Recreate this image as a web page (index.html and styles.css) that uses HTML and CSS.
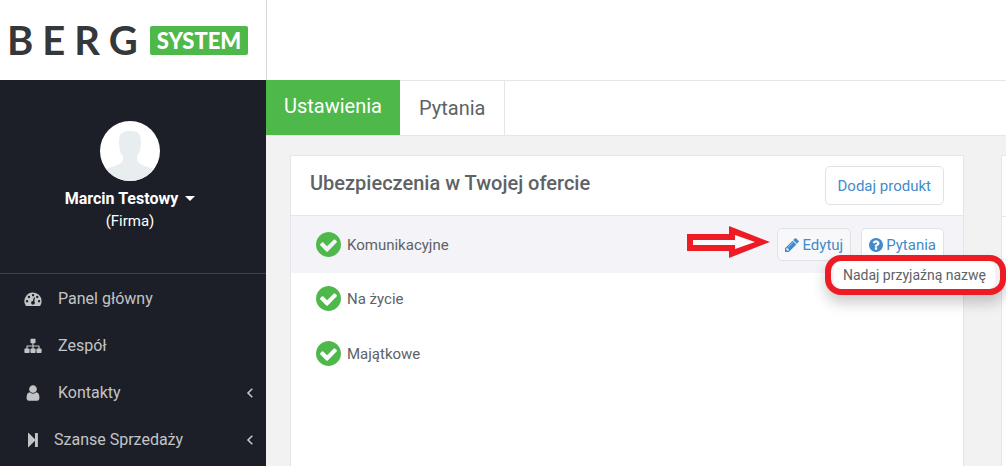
FILE: index.html
```html
<!DOCTYPE html>
<html lang="pl">
<head>
<meta charset="utf-8">
<meta name="viewport" content="width=device-width, initial-scale=1">
<title>Berg System – Ustawienia</title>
<link rel="stylesheet" href="styles.css">
</head>
<body>
<svg class="sprite" aria-hidden="true">
  <symbol id="check" viewBox="128 128 1536 1536"><path d="M1412 734q0-28-18-46l-91-90q-19-19-45-19t-45 19l-408 407-226-226q-19-19-45-19t-45 19l-91 90q-18 18-18 46 0 27 18 45l362 362q19 19 45 19 27 0 46-19l543-543q18-18 18-45zm252 162q0 209-103 385.5t-279.5 279.5-385.5 103-385.5-103-279.5-279.5-103-385.5 103-385.5 279.5-279.5 385.5-103 385.5 103 279.5 279.5 103 385.5z"/></symbol>
  <symbol id="question" viewBox="128 128 1536 1536"><path d="M1024 1376v-192q0-14-9-23t-23-9h-192q-14 0-23 9t-9 23v192q0 14 9 23t23 9h192q14 0 23-9t9-23zm256-672q0-88-55.5-163t-138.5-116-170-41q-243 0-371 213-15 24 8 42l132 100q7 6 19 6 16 0 25-12 53-68 86-92 34-24 86-24 48 0 85.5 26t37.5 59q0 38-20 61t-68 45q-63 28-115.5 86.5t-52.5 125.5v36q0 14 9 23t23 9h192q14 0 23-9t9-23q0-19 21.5-49.5t54.5-49.5q32-18 49-28.5t46-35 44.5-48 28-60.5 12.5-81zm384 192q0 209-103 385.5t-279.5 279.5-385.5 103-385.5-103-279.5-279.5-103-385.5 103-385.5 279.5-279.5 385.5-103 385.5 103 279.5 279.5 103 385.5z"/></symbol>
  <symbol id="pencil" viewBox="128 128 1536 1536"><path d="M491 1536l91-91-235-235-91 91v107h128v128h107zm523-928q0-22-22-22-10 0-17 7l-542 542q-7 7-7 17 0 22 22 22 10 0 17-7l542-542q7-7 7-17zm-54-192l416 416-832 832h-416v-416zm683 96q0 53-37 90l-166 166-416-416 166-165q36-38 90-38 53 0 91 38l235 234q37 39 37 91z"/></symbol>
  <symbol id="user" viewBox="0 0 1792 1792"><path d="M1536 1399q0 109-62.5 187t-150.5 78h-854q-88 0-150.5-78t-62.5-187q0-85 8.5-160.5t31.5-152 58.5-131 94-89 134.5-34.5q131 128 313 128t313-128q76 0 134.5 34.5t94 89 58.5 131 31.5 152 8.5 160.5zm-256-887q0 159-112.5 271.5t-271.5 112.5-271.5-112.5-112.5-271.5 112.5-271.5 271.5-112.5 271.5 112.5 112.5 271.5z"/></symbol>
  <symbol id="gauge" viewBox="0 0 18 18"><path fill-rule="evenodd" d="M9 2.600a8.600 8.600 0 0 1 8.600 8.600c0 1.600-.4 3.100-1.200 4.400-.2.300-.5.400-.8.400H2.400c-.3 0-.6-.1-.8-.4A8.600 8.600 0 0 1 9 2.600zM3 10a1.200 1.200 0 1 0 .1 2.400A1.200 1.200 0 0 0 3 10zm1.900-4.200a1.200 1.200 0 1 0 .1 2.400 1.200 1.200 0 0 0-.1-2.400zM9 4a1.200 1.200 0 1 0 .1 2.400A1.200 1.200 0 0 0 9 4zm4.200 1.800a1.200 1.200 0 1 0 .1 2.400 1.200 1.200 0 0 0-.1-2.400zM15 10a1.200 1.200 0 1 0 .1 2.400A1.200 1.200 0 0 0 15 10zm-5.200-2.500-.9 3.400a1.900 1.900 0 1 0 1.300.4l.9-3.500z"/></symbol>
  <symbol id="sitemap" viewBox="0 0 18 18"><path d="M7.200 1.800h3.600q.7 0 .7.700v3q0 .7-.7.700H9.600v2.200h5.200q.8 0 .8.800v2.200h1.200q.8 0 .8.800v3q0 .8-.8.800h-3.600q-.8 0-.8-.8v-3q0-.8.800-.8h1.200V9.600H9.600v1.800h1.200q.8 0 .8.800v3q0 .8-.8.800H7.200q-.8 0-.8-.8v-3q0-.8.800-.8h1.200V9.600H3.600v1.800h1.200q.8 0 .8.800v3q0 .8-.8.800H1.200q-.8 0-.8-.8v-3q0-.8.800-.8h1.200V9.200q0-.8.800-.8h5.200V6.200H7.200q-.7 0-.7-.7v-3q0-.7.700-.7z"/></symbol>
  <symbol id="step" viewBox="0 0 18 18"><path d="M4 2.300q0-.9.700-.3l6.300 6.300V2.600q0-.6.600-.6h1.700q.6 0 .6.600v12.800q0 .6-.6.600h-1.700q-.6 0-.6-.6V9.700L4.700 16q-.7.600-.7-.3z"/></symbol>
  <symbol id="angle" viewBox="0 0 8 12"><path d="M6.300 1.700 2 6l4.300 4.300" fill="none" stroke="currentColor" stroke-width="1.600"/></symbol>
</svg>

<header class="topbar">
  <a class="logo" href="#">
    <span class="logo-name">BERG</span>
    <span class="logo-tag">SYSTEM</span>
  </a>
</header>

<div class="layout">
  <aside class="sidebar">
    <div class="profile">
      <svg class="avatar" viewBox="0 0 60 60" role="img" aria-label="Avatar">
        <clipPath id="disc"><circle cx="30" cy="30" r="30"/></clipPath>
        <g clip-path="url(#disc)">
          <path fill="#fff" d="M0 0h60v60H0z"/>
          <path fill="#e8edf0" d="M30 10c8 0 11 3 11 10 0 7-1 12-4 15v3c0 5 6 6 17 10v12H6V48c11-4 17-5 17-10v-3c-3-3-4-8-4-15 0-7 3-10 11-10z"/>
        </g>
      </svg>
      <button class="profile-name" type="button">Marcin Testowy <span class="caret"></span></button>
      <span class="profile-role">(Firma)</span>
    </div>
    <nav class="menu">
      <a class="menu-item" href="#"><svg class="menu-icon"><use href="#gauge"/></svg>Panel główny</a>
      <a class="menu-item" href="#"><svg class="menu-icon"><use href="#sitemap"/></svg>Zespół</a>
      <a class="menu-item" href="#"><svg class="menu-icon"><use href="#user"/></svg>Kontakty<svg class="menu-arrow"><use href="#angle"/></svg></a>
      <a class="menu-item menu-item-tight" href="#"><svg class="menu-icon"><use href="#step"/></svg>Szanse Sprzedaży<svg class="menu-arrow"><use href="#angle"/></svg></a>
    </nav>
  </aside>

  <main class="main">
    <nav class="tabs">
      <a class="tab tab-active" href="#">Ustawienia</a>
      <a class="tab" href="#">Pytania</a>
    </nav>
    <div class="panels">
      <section class="panel">
        <div class="panel-head">
          <h1 class="panel-title">Ubezpieczenia w Twojej ofercie</h1>
          <button class="btn btn-large" type="button">Dodaj produkt</button>
        </div>
        <ul class="products">
          <li class="product product-hover">
            <svg class="check"><use href="#check"/></svg>
            <span class="product-name">Komunikacyjne</span>
            <div class="actions">
              <svg class="pointer" viewBox="0 0 83 32" aria-hidden="true"><path d="M5 13h44V8l22 8-22 8v-4H5z" fill="#fafafd"/><path fill="#ed1c24" fill-rule="evenodd" d="M0 8h42V0l41 16-41 16v-7H0zM6 14v5h42v4l20-7-20-7v5z"/></svg>
              <button class="btn btn-hover" type="button"><svg class="btn-icon"><use href="#pencil"/></svg>Edytuj</button>
              <button class="btn" type="button"><svg class="btn-icon"><use href="#question"/></svg>Pytania</button>
              <div class="callout"><span class="tooltip" role="tooltip">Nadaj przyjaźną nazwę</span></div>
            </div>
          </li>
          <li class="product"><svg class="check"><use href="#check"/></svg><span class="product-name">Na życie</span></li>
          <li class="product"><svg class="check"><use href="#check"/></svg><span class="product-name">Majątkowe</span></li>
        </ul>
      </section>
      <section class="panel panel-next"></section>
    </div>
  </main>
</div>
</body>
</html>
```
FILE: styles.css
```css
* { box-sizing: border-box; }
body {
  margin: 0;
  min-height: 100vh;
  display: flex;
  flex-direction: column;
  font-family: Roboto, "Liberation Sans", sans-serif;
  font-size: 16px;
  color: #5e6266;
  background: #f2f2f2;
}
a { color: inherit; text-decoration: none; }
button { font: inherit; cursor: pointer; }
svg { fill: currentColor; flex: none; }
.sprite { position: absolute; width: 0; height: 0; }

.topbar { display: flex; height: 80px; background: #fff; }
.logo {
  display: flex;
  align-items: center;
  gap: 3px;
  width: 267px;
  padding-left: 7px;
  border-right: 1px solid #d5d7da;
}
.logo-name {
  font-family: Lato, sans-serif;
  font-size: 40px;
  font-weight: 700;
  line-height: 40px;
  letter-spacing: 9px;
  color: #35383a;
}
.logo-tag {
  padding: 0 7px;
  border-radius: 2px;
  background: #4fb84a;
  color: #fff;
  font-family: Lato, sans-serif;
  font-size: 22px;
  font-weight: 900;
  line-height: 29px;
}

.layout { display: flex; flex: 1; }
.sidebar { width: 266px; flex: none; background: #1c1f28; color: #c3c4c6; }
.profile {
  display: flex;
  flex-direction: column;
  align-items: center;
  height: 194px;
  padding: 41px 6px 0 0;
  border-bottom: 1px solid #3e4148;
  color: #fff;
}
.avatar { width: 60px; height: 60px; margin-bottom: 6px; }
.profile-name {
  display: flex;
  align-items: center;
  gap: 7px;
  padding: 0;
  border: 0;
  background: none;
  color: #fff;
  font-weight: 700;
  line-height: 23px;
}
.caret { border: 5px solid transparent; border-top-color: #fff; border-bottom: 0; }
.profile-role { font-size: 15px; line-height: 22px; }
.menu { display: flex; flex-direction: column; padding-top: 1px; }
.menu-item {
  display: flex;
  align-items: center;
  gap: 16px;
  height: 47px;
  padding: 0 12px 0 24px;
}
.menu-item-tight { gap: 12px; }
.menu-icon { width: 18px; height: 18px; }
.menu-arrow { width: 8px; height: 12px; margin-left: auto; }

.main { display: flex; flex-direction: column; flex: 1; min-width: 0; }
.tabs {
  display: flex;
  height: 56px;
  background: #fff;
  border-top: 1px solid #e4e7e9;
  border-bottom: 1px solid #e4e7e9;
}
.tab {
  padding: 0 19px;
  border-right: 1px solid #e4e7e9;
  font-size: 20px;
  line-height: 55px;
}
.tab-active {
  margin-top: -1px;
  padding: 0 18px;
  border: 0;
  background: #4fb84a;
  color: #fff;
  line-height: 53px;
}
.panels {
  display: grid;
  flex: 1;
  grid-template-columns: minmax(0, 1fr) 5px;
  gap: 37px;
  padding: 19px 0 0 24px;
}
.panel { border: 1px solid #e4e7e9; border-bottom: 0; background: #fff; }
.panel-next { border-right: 0; }
.panel-next::before { content: ""; display: block; height: 60px; border-bottom: 1px solid #e4e7e9; }
.panel-head {
  display: flex;
  align-items: center;
  justify-content: space-between;
  height: 60px;
  padding: 0 19px;
  border-bottom: 1px solid #e4e7e9;
}
.panel-title { margin: 0; padding-bottom: 6px; font-size: 20px; font-weight: 500; line-height: 24px; }
.btn {
  display: flex;
  align-items: center;
  gap: 3px;
  height: 33px;
  padding: 0 7px;
  border: 1px solid #e0e3e6;
  border-radius: 5px;
  background: #fff;
  color: #428bca;
  font-size: 15px;
}
.btn-hover { background: #f8f8fa; }
.btn-large { height: 39px; padding: 0 12px; }
.btn-icon { width: 14px; height: 14px; }
.products { margin: 0; padding: 0; list-style: none; }
.product {
  display: flex;
  align-items: center;
  gap: 6px;
  height: 55px;
  padding: 0 19px 0 25px;
  font-size: 15px;
}
.product-hover { height: 57px; margin-bottom: -2px; background: #f3f3f8; }
.check { width: 25px; height: 25px; color: #4fb84a; }
.actions {
  position: relative;
  display: flex;
  gap: 10px;
  margin-left: auto;
}
.pointer { position: absolute; right: calc(100% + 7px); top: -2px; width: 83px; height: 32px; }
.callout {
  position: absolute;
  z-index: 1;
  top: 27px;
  right: -62px;
  padding: 0 5px 0 3px;
  border: 6px solid #ed1c24;
  border-radius: 16px;
  box-shadow: 0 8px 14px rgba(0, 0, 0, .2);
  background: #f2f2f2;
}
.tooltip {
  display: block;
  padding: 0 9px;
  border-radius: 8px;
  background: #fff;
  font-size: 14px;
  line-height: 28px;
  white-space: nowrap;
}
```
